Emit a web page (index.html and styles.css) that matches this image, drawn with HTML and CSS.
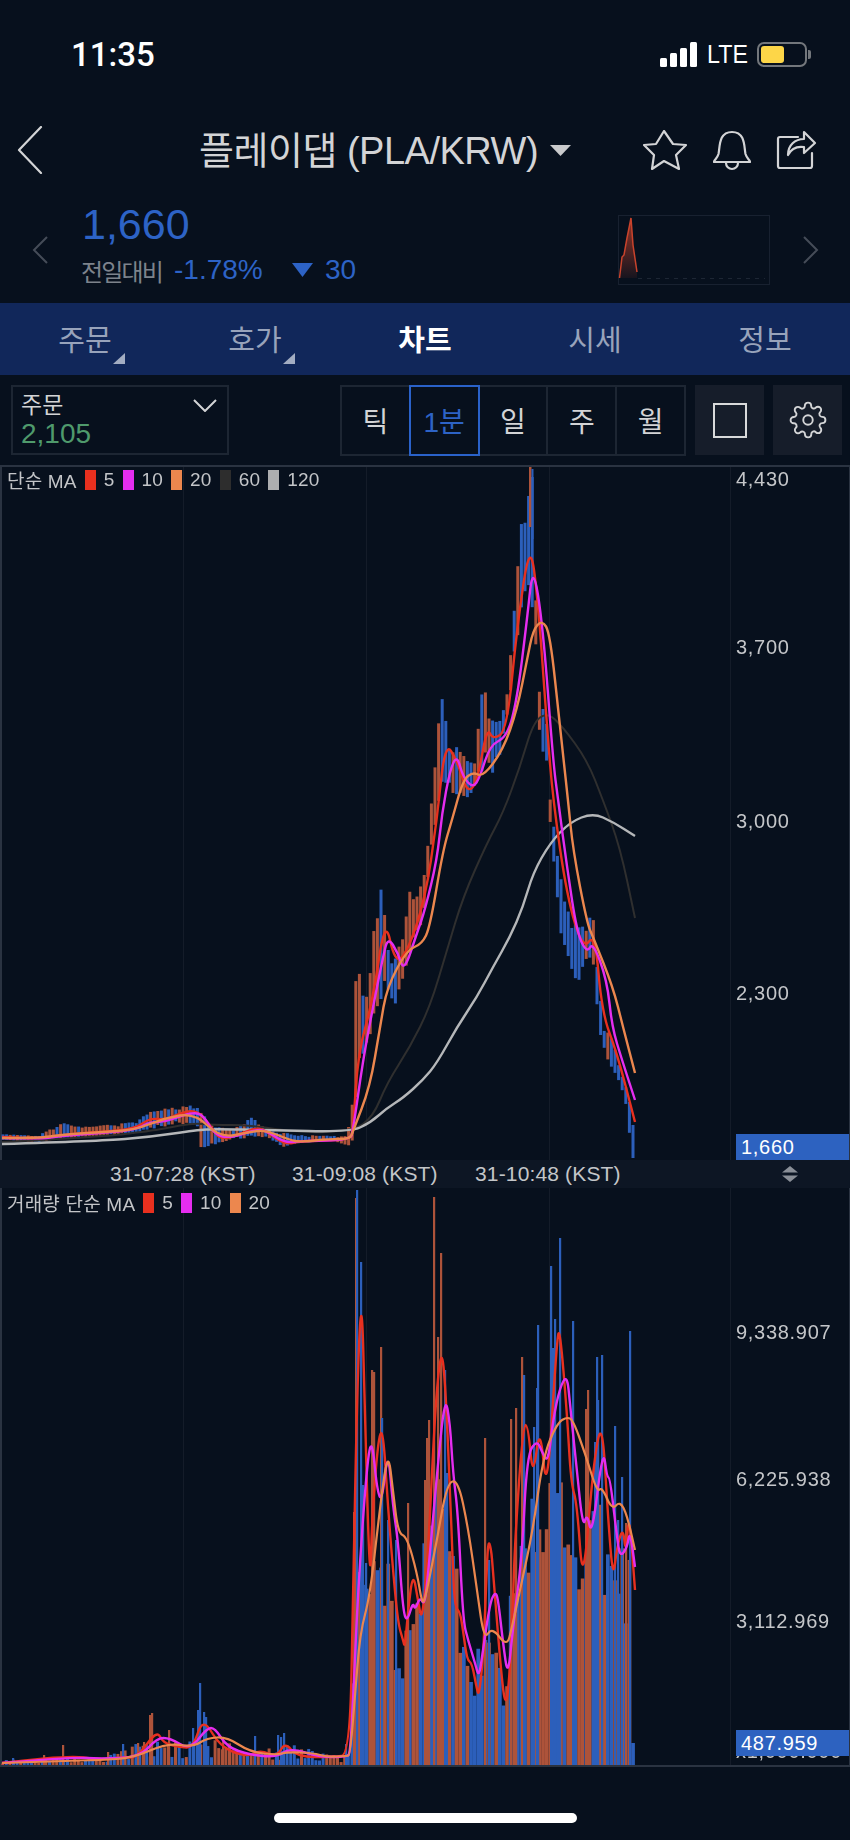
FILE: index.html
```html
<!DOCTYPE html>
<html>
<head>
  <meta charset="utf-8">
  <title>플레이댑 차트</title>
  <link rel="stylesheet" href="styles.css">
</head>
<body>
  <div class="status">
    <span class="clock">11:35</span>
    <div class="bars"><i class="b1"></i><i class="b2"></i><i class="b3"></i><i class="b4"></i></div>
    <span class="net">LTE</span>
    <div class="battery"><i></i></div>
    <div class="batteryCap"></div>
  </div>

  <div class="titleBar">
    <svg class="back" width="26" height="48" viewBox="0 0 26 48"><path d="M24 1 L2 24 L24 47"/></svg>
    <span class="title">플레이댑 (PLA/KRW)</span>
    <svg class="caret" width="21" height="11" viewBox="0 0 21 11"><path d="M0 0 H21 L10.5 11 Z"/></svg>
    <svg class="star" width="44" height="40" viewBox="-1 -1 44 40"><path d="M20 0 L29 13 L42 14 L32 24 L35 38 L20 30 L8 38 L10 24 L0 14 L12 13 Z"/></svg>
    <svg class="bell" width="38" height="41" viewBox="0 0 38 41"><path d="M1 32 C1 30 4 29 5.500 24 C7 17 5.500 2 19 2 C32.500 2 31 17 32.500 24 C34 29 37 30 37 32 Z M13 33 A6 6 0 0 0 25 33"/></svg>
    <svg class="share" width="41" height="41" viewBox="0 0 41 41"><path d="M22 7 H4 A2 2 0 0 0 2 9 V36 A2 2 0 0 0 4 38 H34 A2 2 0 0 0 36 36 V23"/><path d="M28 2 L39 13 L28 23 V17 C21 16 15 19 12 25 C12 15 19 9 28 9 Z"/></svg>
  </div>

  <div class="quote">
    <svg class="prev" width="16" height="28" viewBox="0 0 16 28"><path d="M15 1 L2 14 L15 27"/></svg>
    <div class="quoteText">
      <div class="price">1,660</div>
      <div class="change">
        <span class="changeLabel">전일대비</span>
        <span class="pct">-1.78%</span>
        <svg class="down" width="21" height="14" viewBox="0 0 21 14"><path d="M0 0 H21 L10.500 14 Z"/></svg>
        <span class="diff">30</span>
      </div>
    </div>
    <svg class="mini" width="152" height="70" viewBox="0 0 152 70">
      <defs>
        <linearGradient id="miniFill" x1="0" y1="0" x2="0" y2="1">
          <stop offset="0" stop-color="#c9432c" stop-opacity="0.75"/>
          <stop offset="1" stop-color="#c9432c" stop-opacity="0.08"/>
        </linearGradient>
      </defs>
      <rect class="miniBox" x="0.500" y="0.500" width="151" height="69"/>
      <path class="miniBase" d="M20 63.500 H147"/>
      <path class="miniArea" d="M1.500 63 L4 42 L6 40 L9 23 L13 3 L15 30 L19 57 V63 Z"/>
      <path class="miniLine" d="M1.500 63 L4 42 L6 40 L9 23 L13 3 L15 30 L19 57"/>
    </svg>
    <svg class="next" width="16" height="28" viewBox="0 0 16 28"><path d="M1 1 L14 14 L1 27"/></svg>
  </div>

  <div class="tabs">
    <div class="tab">주문<i class="corner"></i></div>
    <div class="tab">호가<i class="corner"></i></div>
    <div class="tab active">차트</div>
    <div class="tab">시세</div>
    <div class="tab">정보</div>
  </div>

  <div class="tools">
    <div class="orderBox">
      <div class="orderText">
        <span class="orderName">주문</span>
        <span class="orderNum">2,105</span>
      </div>
      <svg width="24" height="13" viewBox="0 0 24 13"><path d="M1 1 L12 12 L23 1"/></svg>
    </div>
    <div class="periods">
      <div class="period">틱</div>
      <div class="period on">1분</div>
      <div class="period">일</div>
      <div class="period">주</div>
      <div class="period">월</div>
    </div>
    <div class="toolBtn"><span class="squareIcon"></span></div>
    <div class="toolBtn">
      <svg class="gear" width="38" height="38" viewBox="0 0 24 24"><circle cx="12" cy="12" r="3"/><path d="M19.400 15a1.650 1.650 0 0 0 .33 1.820l.06.06a2 2 0 0 1 0 2.830 2 2 0 0 1-2.830 0l-.06-.06a1.650 1.650 0 0 0-1.820-.33 1.650 1.650 0 0 0-1 1.510V21a2 2 0 0 1-2 2 2 2 0 0 1-2-2v-.09A1.650 1.650 0 0 0 9 19.400a1.650 1.650 0 0 0-1.820.33l-.06.06a2 2 0 0 1-2.830 0 2 2 0 0 1 0-2.830l.06-.06a1.650 1.650 0 0 0 .33-1.820 1.650 1.650 0 0 0-1.510-1H3a2 2 0 0 1-2-2 2 2 0 0 1 2-2h.09A1.650 1.650 0 0 0 4.600 9a1.650 1.650 0 0 0-.33-1.820l-.06-.06a2 2 0 0 1 0-2.830 2 2 0 0 1 2.830 0l.06.06a1.650 1.650 0 0 0 1.820.33H9a1.650 1.650 0 0 0 1-1.510V3a2 2 0 0 1 2-2 2 2 0 0 1 2 2v.09a1.650 1.650 0 0 0 1 1.510 1.650 1.650 0 0 0 1.820-.33l.06-.06a2 2 0 0 1 2.830 0 2 2 0 0 1 0 2.830l-.06.06a1.650 1.650 0 0 0-.33 1.820V9a1.650 1.650 0 0 0 1.510 1H21a2 2 0 0 1 2 2 2 2 0 0 1-2 2h-.09a1.650 1.650 0 0 0-1.510 1z"/></svg>
    </div>
  </div>

  <div class="panel pricePanel">
    <canvas id="priceChart" width="850" height="695"></canvas>
    <div class="legend">
      <span>단순 MA</span>
      <i class="swatch red"></i><span>5</span>
      <i class="swatch pink"></i><span>10</span>
      <i class="swatch orange"></i><span>20</span>
      <i class="swatch dark"></i><span>60</span>
      <i class="swatch gray"></i><span>120</span>
    </div>
    <span class="axisLabel p1">4,430</span>
    <span class="axisLabel p2">3,700</span>
    <span class="axisLabel p3">3,000</span>
    <span class="axisLabel p4">2,300</span>
    <span class="lastBox priceLast">1,660</span>
  </div>

  <div class="timeAxis">
    <span class="time t1">31-07:28 (KST)</span>
    <span class="time t2">31-09:08 (KST)</span>
    <span class="time t3">31-10:48 (KST)</span>
    <svg class="resize" width="16" height="16" viewBox="0 0 16 16"><path d="M8 0 L16 6.500 H0 Z M0 9.500 H16 L8 16 Z"/></svg>
  </div>

  <div class="panel volumePanel">
    <canvas id="volumeChart" width="850" height="579"></canvas>
    <div class="legend">
      <span>거래량 단순 MA</span>
      <i class="swatch red"></i><span>5</span>
      <i class="swatch pink"></i><span>10</span>
      <i class="swatch orange"></i><span>20</span>
    </div>
    <span class="axisLabel v1">9,338.907</span>
    <span class="axisLabel v2">6,225.938</span>
    <span class="axisLabel v3">3,112.969</span>
    <span class="axisLabel v4">x1,000.000</span>
    <span class="lastBox volumeLast">487.959</span>
  </div>

  <div class="homeArea"><div class="homeBar"></div></div>

  <script src="script.js"></script>
</body>
</html>
```

FILE: styles.css
```css
body {
  margin: 0;
  width: 850px;
  height: 1840px;
  overflow: hidden;
  background-color: #07101d;
  color: #d3d4d6;
  font-family: "Liberation Sans", "Noto Sans CJK KR", sans-serif;
}

svg {
  display: block;
  flex: none;
}

/* status bar */
.status {
  height: 108px;
  display: flex;
  align-items: center;
  padding-left: 71px;
  box-sizing: border-box;
  color: #fff;
}

.clock {
  width: 589px;
  font-family: Roboto, sans-serif;
  font-size: 33px;
  font-weight: 500;
}

.bars {
  display: flex;
  align-items: flex-end;
  gap: 3px;
  height: 25px;
}

.bars i {
  display: block;
  width: 7px;
  background-color: #fff;
  border-radius: 1.500px;
}

.bars .b1 { height: 9px; }
.bars .b2 { height: 14px; }
.bars .b3 { height: 19px; }
.bars .b4 { height: 25px; }

.net {
  margin-left: 10px;
  width: 40px;
  font-size: 25px;
  transform: scaleX(0.93);
  transform-origin: left center;
}

.battery {
  margin-left: 10px;
  width: 50px;
  height: 25px;
  box-sizing: border-box;
  border: 2px solid #73777c;
  border-radius: 7px;
  padding: 2px;
}

.battery i {
  display: block;
  width: 23px;
  height: 17px;
  background-color: #fdd648;
  border-radius: 3px;
}

.batteryCap {
  width: 3px;
  height: 9px;
  background-color: #73777c;
  border-radius: 0 2px 2px 0;
  margin-left: 1px;
}

/* title row */
.titleBar {
  height: 84px;
  display: flex;
  align-items: center;
}

.titleBar svg path {
  fill: none;
  stroke: #d3d4d6;
  stroke-width: 2.200;
  stroke-linejoin: round;
  stroke-linecap: round;
}

.back { margin-left: 17px; }

.title {
  margin-left: 156px;
  margin-top: -5px;
  width: 351px;
  font-size: 38px;
  letter-spacing: -0.500px;
  white-space: nowrap;
}

.titleBar .caret path {
  fill: #c9cacc;
  stroke: none;
}

.star { margin-left: 72px; }
.bell { margin-left: 26px; }
.share { margin-left: 25px; }

/* price row */
.quote {
  height: 111px;
  display: flex;
  align-items: flex-start;
}

.quote .prev, .quote .next {
  margin-top: 44px;
}

.quote .prev path, .quote .next path {
  fill: none;
  stroke: #454c58;
  stroke-width: 2;
}

.prev { margin-left: 32px; }

.quoteText {
  margin-left: 34px;
  width: 536px;
}

.price {
  margin-top: 7px;
  height: 50px;
  line-height: 50px;
  font-size: 43px;
  color: #2d63c6;
}

.change {
  display: flex;
  align-items: center;
  height: 34px;
  margin-top: 4px;
  margin-left: -1px;
  font-size: 28px;
  color: #2d63c6;
}

.changeLabel {
  width: 93px;
  font-size: 24px;
  color: #7d838c;
  letter-spacing: -1.800px;
  white-space: nowrap;
}

.pct { width: 118px; }

.down path { fill: #2d63c6; }

.diff { margin-left: 12px; }

.mini {
  margin-top: 23px;
}

.miniBox {
  fill: none;
  stroke: #182130;
}

.miniBase {
  fill: none;
  stroke: #1d2634;
  stroke-width: 1;
  stroke-dasharray: 4 5;
}

.miniArea { fill: url(#miniFill); }

.miniLine {
  fill: none;
  stroke: #c9432c;
  stroke-width: 1.500;
}

.next { margin-left: 33px; }

/* tab strip */
.tabs {
  height: 72px;
  display: grid;
  grid-template-columns: repeat(5, 1fr);
  background-color: #11275a;
}

.tab {
  position: relative;
  display: flex;
  align-items: center;
  justify-content: center;
  padding-bottom: 2px;
  font-size: 29px;
  color: #98a3bb;
}

.tab.active {
  color: #fff;
  font-weight: bold;
}

.corner {
  position: absolute;
  left: 113px;
  top: 50px;
  width: 0;
  height: 0;
  border-style: solid;
  border-width: 0 0 11px 12px;
  border-color: transparent transparent #a3adc2 transparent;
}

/* period selector row */
.tools {
  height: 90px;
  display: flex;
  align-items: center;
  box-sizing: border-box;
  padding-left: 11px;
}

.orderBox {
  width: 218px;
  height: 70px;
  box-sizing: border-box;
  border: 2px solid #1d2633;
  display: flex;
  justify-content: space-between;
  padding: 0 10px 0 8px;
}

.orderBox svg {
  margin-top: 12px;
}

.orderBox path {
  fill: none;
  stroke: #d3d4d6;
  stroke-width: 2;
}

.orderText {
  display: flex;
  flex-direction: column;
}

.orderName {
  margin-top: 5px;
  height: 26px;
  line-height: 26px;
  font-size: 23px;
}

.orderNum {
  height: 32px;
  line-height: 32px;
  font-size: 28px;
  color: #4f9a6c;
}

.periods {
  margin-left: 111px;
  width: 346px;
  height: 71px;
  box-sizing: border-box;
  border: 2px solid #1d2633;
  display: flex;
}

.period {
  flex: 1;
  display: flex;
  align-items: center;
  justify-content: center;
  border-right: 2px solid #1d2633;
  font-size: 28px;
}

.period:last-child {
  border-right: 0;
}

.period.on {
  margin: -2px 0 -2px -2px;
  border: 2px solid #2a62c9;
  color: #2d63c6;
}

.toolBtn {
  margin-left: 9px;
  width: 69px;
  height: 70px;
  background-color: #161d2a;
  display: flex;
  align-items: center;
  justify-content: center;
}

.squareIcon {
  display: block;
  width: 34px;
  height: 35px;
  box-sizing: border-box;
  border: 2px solid #d8d9da;
}

.gear circle, .gear path {
  fill: none;
  stroke: #d3d4d6;
  stroke-width: 1.200;
}

/* chart panels */
.panel {
  position: relative;
  overflow: hidden;
}

.panel canvas {
  display: block;
}

.legend {
  position: absolute;
  left: 7px;
  top: 1px;
  display: flex;
  align-items: center;
  gap: 8px;
  font-size: 19px;
  letter-spacing: 0.200px;
  color: #c3c5c8;
}

.swatch {
  display: block;
  width: 11px;
  height: 20px;
}

.swatch.red { background-color: #e8301f; }
.swatch.pink { background-color: #e52df0; }
.swatch.orange { background-color: #ec874e; }
.swatch.dark { background-color: #2d2d2d; }
.swatch.gray { background-color: #adaeb0; }

.axisLabel {
  position: absolute;
  left: 736px;
  height: 24px;
  line-height: 24px;
  font-size: 20px;
  letter-spacing: 0.700px;
  color: #c4c6c9;
}

.p1 { top: 2px; }
.p2 { top: 170px; }
.p3 { top: 344px; }
.p4 { top: 516px; }
.v1 { top: 132px; }
.v2 { top: 279px; }
.v3 { top: 421px; }
.v4 { top: 551px; }

.lastBox {
  position: absolute;
  left: 736px;
  width: 113px;
  height: 26px;
  line-height: 27px;
  box-sizing: border-box;
  padding-left: 5px;
  background-color: #2d62c0;
  color: #fff;
  font-size: 20px;
  letter-spacing: 0.700px;
}

.priceLast { top: 669px; }
.volumeLast { top: 542px; }

.timeAxis {
  position: relative;
  height: 28px;
  background-color: #0d1624;
}

.time {
  position: absolute;
  top: 2px;
  line-height: 24px;
  font-size: 21px;
  letter-spacing: 0.150px;
  color: #c4c6c9;
  white-space: nowrap;
}

.t1 { left: 110px; }
.t2 { left: 292px; }
.t3 { left: 475px; }

.resize {
  position: absolute;
  left: 782px;
  top: 6px;
}

.resize path { fill: #8a8f97; }

.homeArea {
  height: 73px;
  display: flex;
  justify-content: center;
  padding-top: 46px;
  box-sizing: border-box;
}

.homeBar {
  width: 303px;
  height: 10px;
  border-radius: 5px;
  background-color: #fff;
}
```

FILE: script.js
```js
// Precios y volumen: puntos [x, y] en coordenadas de pagina
var PRICE_TOP = 465;
var VOLUME_TOP = 1188;
var STEP = 3.6;

var priceHigh = [[2,1134],[40,1136],[43,1132],[63,1123],[88,1127],[123,1123],[137,1122],[150,1110],[167,1108],[192,1105],[197,1107],[213,1125],[233,1129],[252,1117],[267,1130],[300,1135],[347,1136],[351,1113],[353,1097],[355,983],[359,970],[367,997],[373,933],[380,880],[383,897],[390,967],[403,937],[409,890],[417,892],[425,867],[430,820],[433,783],[437,747],[440,702],[444,685],[447,743],[455,745],[467,760],[475,763],[480,703],[484,679],[490,717],[498,723],[506,703],[510,663],[513,623],[516,587],[522,517],[524,510],[528,493],[530,467],[532,468],[534,530],[537,640],[539,690],[547,725],[550,797],[557,850],[563,893],[570,917],[587,930],[592,905],[595,933],[597,967],[603,1023],[613,1040],[623,1080],[628,1093],[633,1125],[635,1137]];
var priceLow = [[2,1140],[37,1142],[73,1139],[100,1137],[140,1133],[160,1127],[197,1123],[199,1152],[213,1145],[233,1139],[267,1137],[283,1147],[300,1143],[333,1141],[350,1146],[353,1143],[355,1110],[358,1075],[362,1060],[370,1037],[377,1007],[387,987],[395,1008],[402,983],[410,950],[423,920],[432,840],[440,800],[447,783],[451,793],[458,798],[470,798],[487,760],[492,777],[500,757],[508,710],[513,673],[522,603],[530,587],[534,627],[537,677],[540,743],[547,767],[550,820],[560,930],[567,955],[572,980],[578,983],[587,957],[593,960],[597,1007],[602,1047],[608,1060],[618,1080],[625,1097],[628,1123],[633,1158]];

var ma5 = [[2,1137],[40,1139],[60,1135],[100,1132],[135,1129],[150,1118],[165,1120],[180,1113],[197,1110],[210,1125],[220,1140],[240,1134],[255,1128],[265,1130],[285,1145],[300,1141],[350,1140],[353,1131],[358,1053],[373,1000],[385,917],[395,963],[407,953],[425,900],[437,820],[445,742],[457,760],[467,793],[477,783],[487,727],[493,740],[507,730],[517,627],[530,540],[538,600],[547,727],[553,800],[567,897],[583,950],[595,933],[602,1013],[617,1053],[635,1122]];
var ma10 = [[2,1138],[40,1139],[60,1136],[100,1133],[135,1130],[150,1122],[165,1122],[180,1116],[197,1112],[205,1118],[215,1135],[230,1138],[255,1130],[265,1130],[285,1143],[300,1141],[350,1140],[353,1131],[363,1060],[373,1007],[383,957],[388,937],[398,953],[404,972],[417,933],[425,910],[437,860],[442,813],[450,770],[457,755],[463,777],[473,788],[480,777],[490,745],[507,737],[517,700],[527,620],[533,563],[543,627],[553,760],[558,800],[567,867],[577,933],[587,953],[593,942],[607,980],[612,1027],[622,1060],[635,1100]];
var ma20 = [[2,1138],[40,1138],[60,1135],[100,1132],[135,1130],[165,1118],[195,1113],[220,1138],[250,1132],[265,1130],[290,1140],[300,1142],[330,1139],[350,1139],[353,1131],[370,1087],[380,1027],[387,987],[407,950],[422,944],[430,927],[443,850],[452,820],[463,780],[473,772],[483,777],[503,750],[517,710],[527,660],[533,630],[542,620],[550,633],[560,727],[568,800],[573,850],[587,923],[593,937],[613,987],[623,1027],[635,1073]];
var ma60 = [[2,1142],[100,1137],[150,1131],[167,1128],[193,1123],[213,1125],[250,1125],[300,1133],[353,1131],[373,1117],[387,1083],[410,1047],[430,1007],[447,950],[463,897],[487,843],[503,813],[520,767],[533,723],[547,712],[563,727],[587,760],[603,800],[620,847],[635,918]];
var ma120 = [[2,1144],[100,1141],[150,1137],[197,1130],[215,1129],[267,1130],[350,1132],[370,1123],[387,1108],[403,1098],[423,1080],[437,1063],[457,1027],[477,997],[493,967],[510,937],[523,907],[533,873],[550,843],[570,822],[593,813],[613,822],[635,836]];

var volumeBase = [[2,1762],[40,1761],[100,1760],[120,1757],[140,1750],[210,1748],[250,1755],[290,1752],[345,1759],[352,1750],[354,1590],[370,1600],[385,1610],[395,1677],[405,1680],[413,1647],[422,1610],[430,1550],[445,1510],[452,1590],[460,1668],[467,1673],[473,1697],[477,1720],[485,1700],[495,1687],[503,1722],[506,1732],[512,1640],[522,1590],[535,1560],[550,1550],[565,1550],[575,1580],[582,1640],[590,1580],[600,1550],[605,1610],[612,1615],[620,1613],[627,1627],[634,1627]];

// Barras altas que sobresalen de la masa: [x, y, color]
var volumeSpikes = [[13,1758,"b"],[44,1755,"r"],[63,1745,"r"],[108,1752,"r"],[123,1744,"b"],[138,1743,"r"],[144,1742,"r"],[150,1715,"r"],[152,1713,"r"],[169,1730,"r"],[193,1728,"b"],[198,1710,"b"],[200,1683,"b"],[204,1712,"b"],[206,1717,"b"],[223,1740,"r"],[255,1736,"b"],[278,1735,"b"],[281,1737,"b"],[284,1733,"b"],[346,1744,"b"],[354,1512,"r"],[356,1198,"r"],[357,1190,"b"],[361,1262,"b"],[363,1485,"b"],[366,1563,"b"],[372,1370,"r"],[374,1372,"r"],[381,1347,"r"],[382,1418,"b"],[388,1520,"b"],[396,1540,"b"],[408,1503,"r"],[425,1480,"r"],[427,1438,"r"],[429,1420,"r"],[434,1197,"r"],[438,1337,"r"],[441,1253,"r"],[445,1370,"b"],[447,1473,"b"],[449,1557,"r"],[485,1438,"r"],[489,1560,"b"],[511,1419,"r"],[516,1408,"r"],[522,1357,"r"],[524,1375,"b"],[534,1427,"b"],[537,1388,"b"],[538,1325,"b"],[551,1266,"b"],[553,1348,"b"],[555,1319,"b"],[560,1238,"b"],[573,1321,"b"],[586,1409,"r"],[588,1390,"r"],[595,1442,"b"],[597,1357,"b"],[598,1400,"b"],[602,1355,"b"],[615,1426,"b"],[618,1520,"b"],[622,1477,"b"],[626,1523,"r"],[630,1331,"b"]];

var volMa5 = [[2,1763],[67,1755],[100,1760],[123,1757],[137,1758],[157,1730],[163,1743],[180,1747],[193,1748],[203,1717],[220,1747],[247,1757],[260,1750],[277,1757],[285,1742],[297,1757],[333,1757],[350,1755],[353,1590],[358,1357],[362,1295],[365,1423],[370,1590],[372,1520],[378,1440],[383,1428],[388,1507],[393,1570],[398,1623],[403,1640],[405,1648],[408,1610],[413,1572],[418,1600],[422,1623],[428,1557],[435,1410],[441,1348],[445,1377],[450,1490],[453,1570],[455,1607],[460,1612],[463,1630],[467,1660],[472,1663],[477,1690],[479,1695],[483,1660],[486,1590],[488,1540],[491,1548],[493,1570],[500,1660],[505,1707],[509,1687],[513,1603],[515,1540],[523,1425],[528,1425],[533,1480],[540,1423],[547,1500],[557,1337],[560,1330],[567,1413],[571,1483],[577,1503],[583,1590],[593,1467],[602,1417],[608,1517],[613,1580],[617,1547],[623,1527],[626,1555],[629,1510],[635,1590]];
var volMa10 = [[2,1763],[73,1757],[100,1759],[140,1757],[157,1738],[170,1738],[190,1750],[207,1728],[215,1728],[227,1747],[250,1755],[277,1757],[290,1748],[320,1757],[347,1757],[350,1753],[353,1703],[358,1590],[367,1463],[372,1438],[377,1490],[382,1502],[388,1448],[393,1507],[398,1540],[403,1610],[407,1622],[413,1602],[415,1610],[420,1597],[424,1605],[427,1587],[437,1473],[445,1395],[450,1423],[453,1473],[458,1513],[463,1620],[468,1640],[475,1663],[479,1678],[483,1650],[490,1603],[495,1592],[498,1598],[503,1643],[508,1678],[513,1627],[522,1557],[527,1455],[537,1440],[542,1452],[548,1463],[553,1420],[560,1387],[567,1375],[570,1403],[577,1473],[583,1528],[587,1513],[592,1537],[603,1447],[607,1477],[610,1478],[617,1537],[620,1557],[627,1548],[630,1530],[635,1567]];
var volMa20 = [[2,1763],[60,1761],[100,1760],[133,1758],[167,1743],[193,1747],[207,1738],[227,1737],[250,1752],[277,1755],[287,1752],[313,1753],[327,1757],[347,1756],[350,1755],[355,1697],[360,1633],[370,1596],[380,1507],[388,1450],[393,1490],[398,1533],[407,1537],[417,1573],[422,1603],[425,1600],[437,1540],[447,1483],[458,1480],[468,1527],[477,1590],[484,1640],[492,1627],[507,1647],[512,1627],[520,1590],[533,1530],[543,1457],[557,1423],[567,1417],[573,1420],[585,1453],[597,1492],[602,1487],[612,1510],[620,1501],[627,1515],[635,1550]];

var RED = "#ad533a";
var BLUE = "#2c5fbb";

// Generador simple para que el dibujo salga siempre igual
var seed = 4217;
function rnd() {
  seed = (seed * 16807) % 2147483647;
  return (seed % 10000) / 10000;
}

function valueAt(points, x) {
  if (x <= points[0][0]) return points[0][1];
  for (var i = 1; i < points.length; i++) {
    if (x <= points[i][0]) {
      var a = points[i - 1];
      var b = points[i];
      return a[1] + (b[1] - a[1]) * (x - a[0]) / (b[0] - a[0]);
    }
  }
  return points[points.length - 1][1];
}

function drawGrid(ctx, height) {
  ctx.fillStyle = "#141c29";
  [183, 366, 549, 730].forEach(function(x) {
    ctx.fillRect(x, 0, 1, height);
  });
  ctx.fillStyle = "#2a3341";
  ctx.fillRect(0, 0, 2, height);
  ctx.fillRect(849, 0, 1, height);
}

function drawLine(ctx, points, color, width) {
  ctx.beginPath();
  ctx.moveTo(points[0][0], points[0][1]);
  for (var i = 1; i < points.length - 1; i++) {
    var mx = (points[i][0] + points[i + 1][0]) / 2;
    var my = (points[i][1] + points[i + 1][1]) / 2;
    ctx.quadraticCurveTo(points[i][0], points[i][1], mx, my);
  }
  var last = points[points.length - 1];
  ctx.lineTo(last[0], last[1]);
  ctx.strokeStyle = color;
  ctx.lineWidth = width;
  ctx.lineJoin = "round";
  ctx.stroke();
}

function drawPrice() {
  var ctx = document.getElementById("priceChart").getContext("2d");
  drawGrid(ctx, 695);
  ctx.fillStyle = "#2a3341";
  ctx.fillRect(0, 0, 850, 2);

  ctx.save();
  ctx.translate(0, -PRICE_TOP);
  for (var x = 3; x < 636; x += STEP) {
    var high = valueAt(priceHigh, x);
    var low = valueAt(priceLow, x);
    var mid = (high + low) / 2;
    var top = high + rnd() * rnd() * (mid - high) * 0.5;
    var bottom = low - rnd() * rnd() * (low - mid) * 0.5;
    var rising = valueAt(priceHigh, x + STEP) < high;
    var isRed = rnd() < (rising ? 0.62 : 0.3);
    // la vela final cae hasta el ultimo precio
    if (x > 620) {
      isRed = false;
      top = high;
      bottom = low;
    }
    ctx.fillStyle = isRed ? RED : BLUE;
    ctx.fillRect(x - 1.5, top, 3, bottom - top);
  }
  // pico maximo, toca el borde superior
  ctx.fillStyle = RED;
  ctx.fillRect(529, 467, 2.5, 60);
  ctx.fillStyle = BLUE;
  ctx.fillRect(531.5, 469, 2, 70);

  drawLine(ctx, ma60, "#2f2f2f", 2);
  drawLine(ctx, ma120, "#b5b7b9", 2.4);
  drawLine(ctx, ma5, "#e8301f", 2.4);
  drawLine(ctx, ma10, "#e52df0", 2.4);
  drawLine(ctx, ma20, "#ec874e", 2.4);
  ctx.restore();
}

function drawVolume() {
  var ctx = document.getElementById("volumeChart").getContext("2d");
  drawGrid(ctx, 579);

  ctx.save();
  ctx.translate(0, -VOLUME_TOP);
  for (var x = 3; x < 636; x += STEP) {
    var base = valueAt(volumeBase, x);
    var spread = x < 352 ? (1765 - base) * 0.6 : 70;
    var top = base - rnd() * spread;
    if (x < 352 && rnd() < 0.25) top = 1765 - (1765 - top) * 0.4;
    if (x > 632) top = 1743;
    ctx.fillStyle = rnd() < 0.5 ? RED : BLUE;
    ctx.fillRect(x - 1.8, top, x < 352 ? 3 : 3.7, 1765 - top);
  }
  volumeSpikes.forEach(function(s) {
    ctx.fillStyle = s[2] === "r" ? RED : BLUE;
    ctx.fillRect(s[0] - 1, s[1], 2.2, 1765 - s[1]);
  });
  drawLine(ctx, volMa5, "#e8301f", 2.4);
  drawLine(ctx, volMa10, "#e52df0", 2.4);
  drawLine(ctx, volMa20, "#ec874e", 2.2);
  ctx.restore();

  ctx.fillStyle = "#2a3341";
  ctx.fillRect(0, 577, 850, 2);
}

drawPrice();
drawVolume();
```
